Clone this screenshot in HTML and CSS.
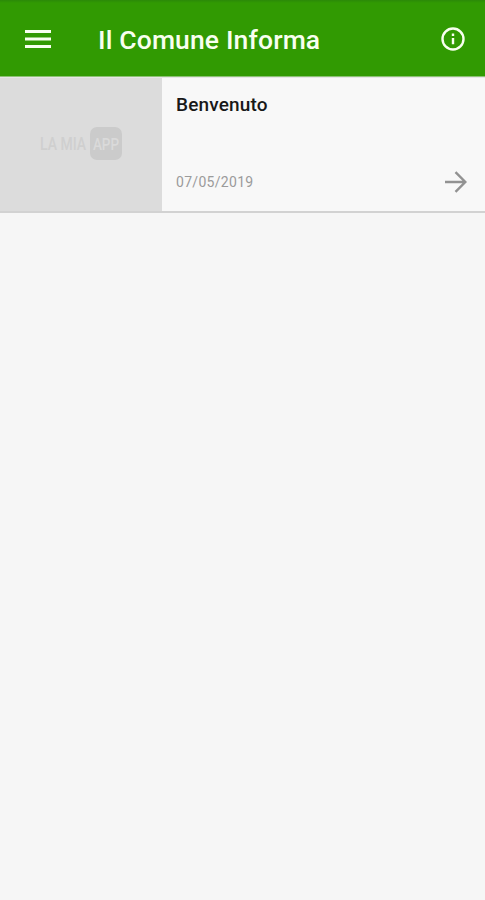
FILE: index.html
```html
<!DOCTYPE html>
<html lang="it">
<head>
<meta charset="utf-8">
<title>Il Comune Informa</title>
<link rel="stylesheet" href="styles.css">
</head>
<body>
<header class="bar">
  <svg class="menu" viewBox="0 0 26 18"><path d="M0 1.5h26M0 9h26M0 16.5h26"/></svg>
  <h1 class="title">Il Comune Informa</h1>
  <svg class="info" viewBox="0 0 24 24"><circle cx="12" cy="12" r="10.5"/><path d="M12 11v6.3M12 6.6v2.5"/></svg>
</header>
<main>
  <article class="card">
    <div class="thumb">
      <div class="logo">
        <span class="logo-word">LA MIA</span>
        <span class="logo-badge"><span class="logo-app">APP</span></span>
      </div>
    </div>
    <div class="content">
      <h2 class="name">Benvenuto</h2>
      <div class="foot">
        <time class="date">07/05/2019</time>
        <svg class="arrow" viewBox="0 0 22 22"><path d="M0 11h20M10.5 1.2L20.3 11l-9.8 9.8"/></svg>
      </div>
    </div>
  </article>
</main>
</body>
</html>
```
FILE: styles.css
```css
* { box-sizing: border-box; }
body {
  margin: 0;
  min-height: 100vh;
  background: #f6f6f6;
  font-family: Roboto, "Liberation Sans", sans-serif;
}
h1, h2 { margin: 0; }
svg { display: block; flex: none; fill: none; }
.bar {
  display: flex;
  align-items: center;
  height: 77px;
  padding: 2px 20px 0 25px;
  background: linear-gradient(#2b8a08, #319a02 3px);
  border-bottom: 1px solid #8cc274;
}
.menu { width: 26px; height: 18px; stroke: #f8fff0; stroke-width: 2.8; }
.title {
  flex: 1;
  margin-left: 47px;
  padding-top: 2px;
  color: #f8fff0;
  font-size: 26.5px;
  font-weight: 500;
  line-height: 34px;
  letter-spacing: 0.14px;
  white-space: nowrap;
}
.info { width: 24px; height: 24px; stroke: #f8fff0; stroke-width: 2.4; }
.card {
  display: flex;
  height: 136px;
  background: #f8f8f8;
  border-top: 1px solid #e6e6e6;
  border-bottom: 2px solid #d2d2d2;
}
.thumb {
  display: flex;
  align-items: center;
  width: 162px;
  padding: 0 0 2px 40px;
  background: #dcdcdc;
}
.logo {
  display: flex;
  align-items: center;
  justify-content: space-between;
  width: 82px;
  font-size: 14px;
  font-weight: 500;
  line-height: 18px;
  white-space: nowrap;
}
.logo-word { color: #cfcfcf; transform: scaleY(1.25); }
.logo-badge {
  display: flex;
  align-items: center;
  justify-content: center;
  width: 32px;
  height: 33px;
  border-radius: 7px;
  background: #cbcbcb;
}
.logo-app { color: #dadada; font-size: 13.5px; transform: scaleY(1.25); }
.content {
  display: flex;
  flex: 1;
  flex-direction: column;
  justify-content: space-between;
  padding: 15px 18px 18px 14px;
}
.name { color: #181818; font-size: 19px; font-weight: 500; line-height: 24px; letter-spacing: 0.15px; }
.foot { display: flex; align-items: center; justify-content: space-between; }
.date { color: #9b9b9b; font-size: 14px; line-height: 22px; letter-spacing: 0.3px; }
.arrow { width: 22px; height: 22px; stroke: #929292; stroke-width: 2.4; }
```
